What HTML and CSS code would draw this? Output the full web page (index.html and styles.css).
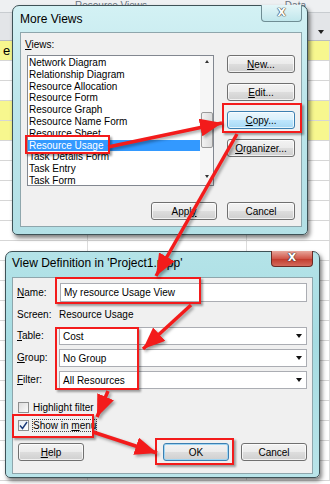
FILE: index.html
```html
<!DOCTYPE html>
<html lang="en">
<head>
    <meta charset="UTF-8">
    <meta name="viewport" content="width=device-width, initial-scale=1.0">
    <title>More Views - View Definition</title>
    <link rel="stylesheet" href="styles.css">
</head>
<body>
    <div class="screen">
        <!-- hoja de fondo -->
        <div class="sheet">
            <div class="sheet-top">
                <span class="sheet-title">Resource Views</span>
                <span class="sheet-data">Data</span>
            </div>
            <div class="sheet-head"><span class="head-drop"></span></div>
            <div class="sheet-row yellow"><span class="cell">e</span><span class="cell"></span><span class="cell"></span></div>
            <div class="sheet-row"><span class="cell"></span><span class="cell"></span><span class="cell"></span></div>
            <div class="sheet-row"><span class="cell"></span><span class="cell"></span><span class="cell"></span></div>
            <div class="sheet-row yellow"><span class="cell"></span><span class="cell"></span><span class="cell"></span></div>
            <div class="sheet-row yellow"><span class="cell"></span><span class="cell"></span><span class="cell"></span></div>
            <div class="sheet-row"><span class="cell"></span><span class="cell"></span><span class="cell"></span></div>
            <div class="sheet-row"><span class="cell"></span><span class="cell"></span><span class="cell"></span></div>
            <div class="sheet-row"><span class="cell"></span><span class="cell"></span><span class="cell"></span></div>
            <div class="sheet-row"><span class="cell"></span><span class="cell"></span><span class="cell"></span></div>
            <div class="sheet-row"><span class="cell"></span><span class="cell"></span><span class="cell"></span></div>
            <div class="sheet-row"><span class="cell"></span><span class="cell"></span><span class="cell"></span></div>
            <div class="sheet-row"><span class="cell"></span><span class="cell"></span><span class="cell"></span></div>
            <div class="sheet-row"><span class="cell"></span><span class="cell"></span><span class="cell"></span></div>
            <div class="sheet-row"><span class="cell"></span><span class="cell"></span><span class="cell"></span></div>
            <div class="sheet-row"><span class="cell"></span><span class="cell"></span><span class="cell"></span></div>
            <div class="sheet-row"><span class="cell"></span><span class="cell"></span><span class="cell"></span></div>
            <div class="sheet-row"><span class="cell"></span><span class="cell"></span><span class="cell"></span></div>
            <div class="sheet-row"><span class="cell"></span><span class="cell"></span><span class="cell"></span></div>
            <div class="sheet-row"><span class="cell"></span><span class="cell"></span><span class="cell"></span></div>
            <div class="sheet-row"><span class="cell"></span><span class="cell"></span><span class="cell"></span></div>
            <div class="sheet-row"><span class="cell"></span><span class="cell"></span><span class="cell"></span></div>
            <div class="sheet-row"><span class="cell"></span><span class="cell"></span><span class="cell"></span></div>
        </div>

        <!-- More Views -->
        <div class="window more-views">
            <div class="titlebar">
                <span class="title">More Views</span>
                <span class="close">X</span>
            </div>
            <div class="client views-client">
                <div class="views-label"><u>V</u>iews:</div>
                <div class="views-body">
                    <div class="listbox">
                        <ul class="items">
                            <li>Network Diagram</li>
                            <li>Relationship Diagram</li>
                            <li>Resource Allocation</li>
                            <li>Resource Form</li>
                            <li>Resource Graph</li>
                            <li>Resource Name Form</li>
                            <li>Resource Sheet</li>
                            <li class="selected">Resource Usage</li>
                            <li>Task Details Form</li>
                            <li>Task Entry</li>
                            <li>Task Form</li>
                        </ul>
                        <div class="scrollbar">
                            <span class="arrow-up"></span>
                            <span class="thumb"></span>
                            <span class="arrow-down"></span>
                        </div>
                    </div>
                    <div class="side-buttons">
                        <button class="btn"><u>N</u>ew...</button>
                        <button class="btn"><u>E</u>dit...</button>
                        <button class="btn hot"><u>C</u>opy...</button>
                        <button class="btn"><u>O</u>rganizer...</button>
                    </div>
                </div>
                <div class="footer">
                    <button class="btn wide">Appl<u>y</u></button>
                    <button class="btn wide">Cancel</button>
                </div>
            </div>
        </div>

        <!-- View Definition -->
        <div class="window view-def">
            <div class="titlebar">
                <span class="title">View Definition in 'Project1.mpp'</span>
                <span class="close red">X</span>
            </div>
            <div class="client def-client">
                <div class="form">
                    <span class="lbl"><u>N</u>ame:</span>
                    <span class="field">My resource Usage View</span>
                    <span class="lbl">Screen:</span>
                    <span class="static">Resource Usage</span>
                    <span class="lbl"><u>T</u>able:</span>
                    <span class="field select">Cost</span>
                    <span class="lbl"><u>G</u>roup:</span>
                    <span class="field select">No Group</span>
                    <span class="lbl"><u>F</u>ilter:</span>
                    <span class="field select">All Resources</span>
                </div>
                <div class="checks">
                    <div class="check"><span class="box"></span><span>Highlight filter</span></div>
                    <div class="check"><span class="box checked"><svg width="9" height="9" viewBox="0 0 9 9"><path d="M1 4.5 L3.5 7.5 L8 1" fill="none" stroke="#1c3b7a" stroke-width="1.4"/></svg></span><span class="focus">Show in <u>m</u>enu</span></div>
                </div>
                <div class="footer def-footer">
                    <button class="btn wide"><u>H</u>elp</button>
                    <span class="spacer"></span>
                    <button class="btn wide default">OK</button>
                    <button class="btn wide">Cancel</button>
                </div>
            </div>
        </div>

        <!-- marcas rojas -->
        <div class="mark m-usage"></div>
        <div class="mark m-copy"></div>
        <div class="mark m-name"></div>
        <div class="mark m-fields"></div>
        <div class="mark m-menu"></div>
        <div class="mark m-ok"></div>

        <svg class="arrows" width="330" height="484" viewBox="0 0 330 484">
            <defs>
                <marker id="head" markerUnits="userSpaceOnUse" markerWidth="24" markerHeight="18" refX="22" refY="9" orient="auto">
                    <path d="M0 0 L22 9 L0 18 Z" fill="#f31b1b"/>
                </marker>
            </defs>
            <g stroke="#f31b1b" stroke-width="3.5" fill="none" marker-end="url(#head)">
                <path d="M108 147 L222 123"/>
                <path d="M237 134 L156 276"/>
                <path d="M191 305 L143 349"/>
                <path d="M108 391 L97 417"/>
                <path d="M93 432 L157 453"/>
            </g>
        </svg>
    </div>
</body>
</html>
```

FILE: styles.css
```css
* {
    box-sizing: border-box;
}

body {
    margin: 0;
    font-family: "Liberation Sans", Arial, sans-serif;
    font-size: 10px;
    color: #000;
}

.screen {
    position: relative;
    width: 330px;
    height: 484px;
    overflow: hidden;
    background: #fff;
}

/* hoja de fondo */
.sheet {
    display: flex;
    flex-direction: column;
}

.sheet-top {
    height: 13px;
    background: #eef0f2;
    border-bottom: 1px solid #c8ccd0;
    color: #6a7480;
    font-size: 10px;
    line-height: 12px;
}

.sheet-title {
    margin-left: 75px;
}

.sheet-data {
    margin-left: 135px;
}

.sheet-head {
    height: 28px;
    background: #e3e5e8;
    border-bottom: 1px solid #b8bcc0;
    display: flex;
    justify-content: flex-end;
    align-items: center;
    padding: 10px 6px 0 0;
}

.head-drop {
    width: 0;
    height: 0;
    border-left: 3px solid transparent;
    border-right: 3px solid transparent;
    border-top: 4px solid #222;
}

.sheet-row {
    display: grid;
    grid-template-columns: 88px 159px 1fr;
    height: 20px;
    border-bottom: 1px solid #d6d6d6;
}

.sheet-row.yellow {
    background: #f7f78e;
}

.cell {
    border-right: 1px solid #dcdcdc;
    padding-left: 3px;
    font-size: 13px;
    line-height: 19px;
}

/* ventanas */
.window {
    position: absolute;
    display: flex;
    flex-direction: column;
    border: 1px solid #3e5257;
    border-radius: 7px 7px 5px 5px;
    background: linear-gradient(#d3f1f4, #bde6eb 40%, #b3e0e6);
    box-shadow: 2px 3px 4px rgba(0, 0, 0, 0.5);
}

.more-views {
    left: 12px;
    top: 5px;
    width: 296px;
    height: 230px;
}

.view-def {
    left: 5px;
    top: 251px;
    width: 315px;
    height: 227px;
    background: linear-gradient(#b4e3e8, #a6dce2 40%, #b9e4e9);
}

.titlebar {
    display: flex;
    align-items: flex-start;
    height: 26px;
    padding-left: 7px;
}

.title {
    font-size: 12px;
    line-height: 26px;
    color: #000;
}

.close {
    margin-left: auto;
    margin-right: 5px;
    margin-top: -1px;
    width: 41px;
    height: 17px;
    border: 1px solid #6f8d94;
    border-top: none;
    border-radius: 0 0 4px 4px;
    background: linear-gradient(#e4f6f8, #c1e7ec);
    color: #fff;
    font-family: "DejaVu Sans", sans-serif;
    font-weight: bold;
    font-size: 11px;
    line-height: 15px;
    text-align: center;
    text-shadow: 0 0 1px #333, 0 0 1px #333, 0 0 1px #333;
}

.close.red {
    margin-right: 6px;
    width: 42px;
    height: 16px;
    border-color: #6b2a24;
    background: linear-gradient(#e7a79c, #d1574a 50%, #c1392b 51%, #d36a5c);
    line-height: 14px;
}

.view-def .titlebar {
    height: 25px;
    padding-left: 6px;
}

.view-def .title {
    line-height: 23px;
}

.client {
    flex: 1;
    display: flex;
    flex-direction: column;
    background: #f0f0f0;
    border: 1px solid #8ea6ac;
}

/* More Views */
.views-client {
    margin: 0 5px 7px 7px;
    padding: 5px 6px 6px 6px;
}

.views-label {
    line-height: 14px;
    margin-left: -2px;
    margin-bottom: 3px;
}

.views-body {
    display: flex;
    gap: 13px;
}

.listbox {
    position: relative;
    width: 187px;
    height: 131px;
    border: 1px solid #828790;
    background: #fff;
    display: flex;
}

.items {
    list-style: none;
    margin: 0;
    padding: 1px 0 0 0;
    flex: 1;
}

.items li {
    height: 11.8px;
    line-height: 11.8px;
    padding-left: 1px;
    white-space: nowrap;
}

.items li.selected {
    background: #3399ff;
    color: #fff;
}

.scrollbar {
    width: 13px;
    background: #f6f6f6;
    display: flex;
    flex-direction: column;
    align-items: center;
    padding-top: 4px;
}

.arrow-up,
.arrow-down {
    width: 0;
    height: 0;
    border-left: 2.5px solid transparent;
    border-right: 2.5px solid transparent;
}

.arrow-up {
    border-bottom: 3px solid #333;
}

.arrow-down {
    border-top: 3px solid #333;
    margin-top: 27px;
}

.thumb {
    width: 12px;
    height: 36px;
    margin-top: 49px;
    border: 1px solid #9a9a9a;
    border-radius: 2px;
    background: linear-gradient(90deg, #f2f2f2, #dcdcdc);
}

.side-buttons {
    display: flex;
    flex-direction: column;
    gap: 10px;
    width: 68px;
}

.btn {
    height: 18px;
    width: 68px;
    padding: 0;
    border: 1px solid #707070;
    border-radius: 3px;
    background: linear-gradient(#f3f3f3, #ebebeb 48%, #dddddd 52%, #cfcfcf);
    font-family: inherit;
    font-size: 10px;
    color: #000;
    box-shadow: inset 0 0 0 1px rgba(255, 255, 255, 0.7);
}

.btn.hot {
    border-color: #3c7fb1;
    background: linear-gradient(#eaf6fd, #d9f0fc 48%, #bee6fd 52%, #a7d9f5);
}

.btn.default {
    border-color: #3c7fb1;
    box-shadow: inset 0 0 0 1px #9fd5f3;
}

.footer {
    display: flex;
    justify-content: flex-end;
    gap: 10px;
    margin-top: auto;
}

.footer .wide {
    width: 66px;
}

.footer .wide:last-child {
    width: 68px;
}

/* View Definition */
.def-client {
    margin: 0 6px 3px 6px;
    padding: 5px 5px 12px 4px;
}

.form {
    display: grid;
    grid-template-columns: 42px 1fr;
    grid-template-rows: 19px 17px 18px 18px 18px;
    row-gap: 4px;
    align-items: center;
}

.lbl {
    line-height: 14px;
}

.field {
    height: 100%;
    display: flex;
    align-items: center;
    padding-left: 3px;
    background: #fff;
    border: 1px solid #abadb3;
    margin-left: 1px;
}

.select {
    margin-left: 0;
}

.select::after {
    content: "";
    margin-left: auto;
    margin-right: 4px;
    width: 0;
    height: 0;
    border-left: 3.5px solid transparent;
    border-right: 3.5px solid transparent;
    border-top: 4px solid #111;
}

.checks {
    display: flex;
    flex-direction: column;
    gap: 8px;
    margin-top: 13px;
    padding-left: 1px;
}

.check {
    display: flex;
    align-items: center;
    gap: 4px;
    height: 10px;
}

.box {
    width: 11px;
    height: 11px;
    border: 1px solid #8e8f8f;
    background: linear-gradient(135deg, #dcdcdc, #fbfbfb);
    display: flex;
    align-items: center;
    justify-content: center;
}

.box.checked {
    background: linear-gradient(135deg, #e8eef6, #ffffff);
}

.focus {
    outline: 1px dotted #444;
    line-height: 11px;
}

.def-footer {
    margin-top: 13px;
    gap: 12px;
    padding-left: 1px;
}

.spacer {
    flex: 1;
}

.def-footer .wide,
.def-footer .wide:last-child {
    width: 66px;
}

/* marcas rojas y flechas */
.mark {
    position: absolute;
    border: 2px solid #f31b1b;
    box-shadow: 2px 2px 2px rgba(0, 0, 0, 0.35);
}

.m-usage {
    left: 25px;
    top: 135px;
    width: 85px;
    height: 19px;
}

.m-copy {
    left: 222px;
    top: 103px;
    width: 80px;
    height: 30px;
}

.m-name {
    left: 55px;
    top: 277px;
    width: 146px;
    height: 27px;
}

.m-fields {
    left: 55px;
    top: 327px;
    width: 84px;
    height: 63px;
}

.m-menu {
    left: 12px;
    top: 414px;
    width: 82px;
    height: 24px;
}

.m-ok {
    left: 155px;
    top: 438px;
    width: 79px;
    height: 27px;
}

.arrows {
    position: absolute;
    left: 0;
    top: 0;
    pointer-events: none;
    filter: drop-shadow(2px 2px 1.5px rgba(0, 0, 0, 0.35));
}
```
